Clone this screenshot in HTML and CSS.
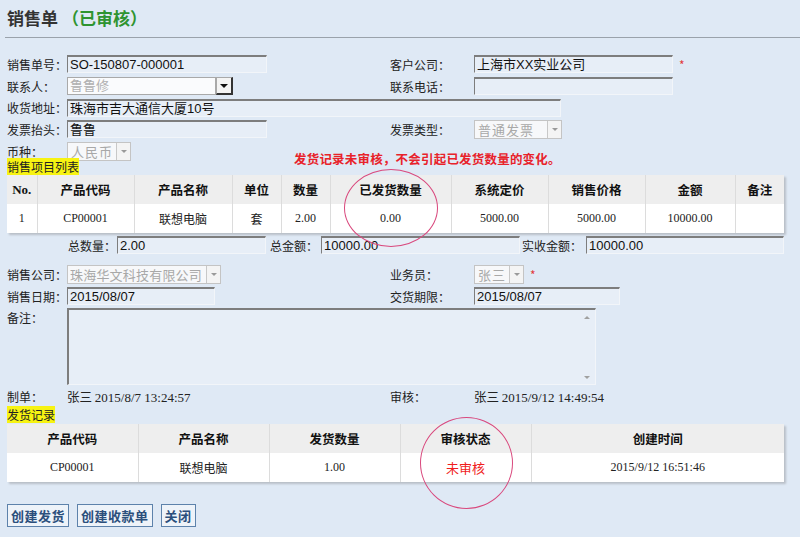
FILE: index.html
```html
<!DOCTYPE html>
<html lang="zh">
<head>
<meta charset="utf-8">
<title>销售单</title>
<link rel="stylesheet" href="styles.css">
</head>
<body>
<div class="page">
  <div class="title"><span class="t-main">销售单</span><span class="t-status">（已审核）</span></div>
  <div class="rule"></div>

  <div class="form">
    <div class="row">
      <span class="lbl">销售单号：</span>
      <span class="inp w200">SO-150807-000001</span>
      <span class="lbl">客户公司：</span>
      <span class="fld"><span class="inp w199">上海市XX实业公司</span><span class="req">*</span></span>
    </div>
    <div class="row">
      <span class="lbl">联系人：</span>
      <span class="fld"><span class="combo"><span class="combo-text">鲁鲁修</span></span><span class="combo-btn"><span class="tri"></span></span></span>
      <span class="lbl">联系电话：</span>
      <span class="inp w199"></span>
    </div>
    <div class="row short">
      <span class="lbl">收货地址：</span>
      <span class="inp w494 span3">珠海市吉大通信大厦10号</span>
    </div>
    <div class="row">
      <span class="lbl">发票抬头：</span>
      <span class="inp w200">鲁鲁</span>
      <span class="lbl">发票类型：</span>
      <span class="sel w88"><span class="sel-text">普通发票</span><span class="sel-btn"><span class="dtri"></span></span></span>
    </div>
    <div class="row">
      <span class="lbl">币种：</span>
      <span class="fld span3">
        <span class="sel w64"><span class="sel-text">人民币</span><span class="sel-btn"><span class="dtri"></span></span></span>
        <span class="notice">发货记录未审核，不会引起已发货数量的变化。</span>
      </span>
    </div>
  </div>

  <div class="section"><mark class="hl">销售项目列表</mark></div>
  <table class="grid items">
    <colgroup>
      <col style="width:30px"><col style="width:97px"><col style="width:98px"><col style="width:49px"><col style="width:49px"><col style="width:121px"><col style="width:97px"><col style="width:97px"><col style="width:90px"><col style="width:49px">
    </colgroup>
    <thead>
      <tr><th class="serif">No.</th><th>产品代码</th><th>产品名称</th><th>单位</th><th>数量</th><th>已发货数量</th><th>系统定价</th><th>销售价格</th><th>金额</th><th>备注</th></tr>
    </thead>
    <tbody>
      <tr><td class="serif">1</td><td class="serif">CP00001</td><td>联想电脑</td><td>套</td><td class="num">2.00</td><td class="num">0.00</td><td class="num">5000.00</td><td class="num">5000.00</td><td class="num">10000.00</td><td></td></tr>
    </tbody>
  </table>

  <div class="totals">
    <span class="tl w49">总数量：</span><span class="inp w149">2.00</span>
    <span class="tl w51 ml4">总金额：</span><span class="inp w199">10000.00</span>
    <span class="tl w64 ml2">实收金额：</span><span class="inp w198">10000.00</span>
  </div>

  <div class="form form2">
    <div class="row">
      <span class="lbl">销售公司：</span>
      <span class="sel w154"><span class="sel-text tight">珠海华文科技有限公司</span><span class="sel-btn"><span class="dtri"></span></span></span>
      <span class="lbl">业务员：</span>
      <span class="fld"><span class="sel w50"><span class="sel-text">张三</span><span class="sel-btn"><span class="dtri"></span></span></span><span class="req">*</span></span>
    </div>
    <div class="row">
      <span class="lbl">销售日期：</span>
      <span class="inp w148">2015/08/07</span>
      <span class="lbl">交货期限：</span>
      <span class="inp w146">2015/08/07</span>
    </div>
    <div class="row tall">
      <span class="lbl top">备注：</span>
      <span class="area span3"><span class="scroll"><span class="up"></span><span class="down"></span></span></span>
    </div>
    <div class="row meta">
      <span class="lbl">制单：</span>
      <span class="who">张三 <span class="serif">2015/8/7 13:24:57</span></span>
      <span class="lbl">审核：</span>
      <span class="who">张三 <span class="serif">2015/9/12 14:49:54</span></span>
    </div>
  </div>

  <div class="section s2"><mark class="hl">发货记录</mark></div>
  <table class="grid ships">
    <colgroup>
      <col style="width:131px"><col style="width:131px"><col style="width:131px"><col style="width:131px"><col style="width:253px">
    </colgroup>
    <thead>
      <tr><th>产品代码</th><th>产品名称</th><th>发货数量</th><th>审核状态</th><th>创建时间</th></tr>
    </thead>
    <tbody>
      <tr><td class="serif">CP00001</td><td>联想电脑</td><td class="serif">1.00</td><td class="red">未审核</td><td class="serif">2015/9/12 16:51:46</td></tr>
    </tbody>
  </table>

  <div class="buttons">
    <button class="btn">创建发货</button>
    <button class="btn">创建收款单</button>
    <button class="btn">关闭</button>
  </div>

  <div class="ring ring1"></div>
  <div class="ring ring2"></div>
</div>
</body>
</html>
```

FILE: styles.css
```css
html, body {
  margin: 0;
  padding: 0;
  background: #dfe9f5;
}
body {
  font-family: "Noto Sans CJK SC", "Liberation Sans", sans-serif;
  font-size: 12px;
  color: #222;
  width: 800px;
  height: 537px;
  overflow: hidden;
}
.page {
  position: relative;
  padding: 0 0 0 7px;
}
.title {
  height: 30px;
  display: flex;
  align-items: center;
  padding-top: 2px;
}
.t-main {
  font-size: 17px;
  font-weight: bold;
  color: #333;
}
.t-status {
  font-size: 17px;
  font-weight: bold;
  color: #2f9430;
  margin-left: 4px;
}
.rule {
  margin: 5px 0 0 -2px;
  border-top: 1px solid #9aa2ab;
  height: 0;
}
.form {
  margin-top: 15px;
}
.row {
  display: grid;
  grid-template-columns: 60px 323px 84px 1fr;
  align-items: center;
  height: 22px;
}
.row.short { height: 21px; }
.span3 { grid-column: 2 / 5; }
.lbl {
  white-space: nowrap;
  color: #222;
}
.lbl.top { align-self: start; padding-top: 2px; }
.fld {
  display: flex;
  align-items: center;
}
.inp {
  display: block;
  box-sizing: border-box;
  height: 18px;
  line-height: 15px;
  font-family: "Liberation Sans", "Noto Sans CJK SC", sans-serif;
  font-size: 13px;
  color: #111;
  background: #e7eef7;
  border-top: 2px solid #7d7d7d;
  border-left: 1px solid #7d7d7d;
  border-right: 1px solid #f2f5f9;
  border-bottom: 1px solid #f2f5f9;
  padding: 0 2px;
  white-space: nowrap;
  overflow: hidden;
}
.w200 { width: 200px; }
.w199 { width: 199px; }
.w198 { width: 198px; }
.w494 { width: 494px; }
.w149 { width: 149px; }
.w148 { width: 148px; }
.w146 { width: 146px; }
.req {
  color: #e23a3a;
  margin-left: 6px;
  font-size: 12px;
}
.combo {
  box-sizing: border-box;
  width: 149px;
  height: 18px;
  background: #fafbfd;
  border: 1px solid #a9a9a9;
  padding: 0 2px;
  font-family: "Liberation Sans", "Noto Sans CJK SC", sans-serif;
  font-size: 13px;
  line-height: 16px;
  color: #b0b0b0;
}
.combo-btn {
  box-sizing: border-box;
  width: 17px;
  height: 18px;
  background: #f4f4f4;
  border: 1px solid #a9a9a9;
  border-right: 2px solid #333;
  border-bottom: 2px solid #333;
  display: flex;
  align-items: center;
  justify-content: center;
}
.tri {
  width: 0;
  height: 0;
  border-left: 4px solid transparent;
  border-right: 4px solid transparent;
  border-top: 4px solid #111;
}
.sel {
  box-sizing: border-box;
  display: flex;
  height: 19px;
  background: #f7f8fa;
  border: 1px solid #c4c4c4;
}
.sel-text {
  flex: 1;
  padding: 0 3px;
  font-size: 13px;
  line-height: 17px;
  color: #a8a8a8;
  white-space: nowrap;
  overflow: hidden;
  letter-spacing: 1px;
}
.sel-text.tight {
  padding: 0 1px 0 2px;
  letter-spacing: 0.2px;
}
.sel-btn {
  width: 13px;
  border-left: 1px solid #c8c8c8;
  background: #f4f4f4;
  display: flex;
  align-items: center;
  justify-content: center;
}
.dtri {
  width: 0;
  height: 0;
  border-left: 3px solid transparent;
  border-right: 3px solid transparent;
  border-top: 3px solid #9a9a9a;
}
.w88 { width: 88px; }
.w64 { width: 64px; }
.w154 { width: 154px; }
.w50 { width: 50px; }
.notice {
  margin-left: 163px;
  align-self: flex-end;
  margin-bottom: -7px;
  color: #e8222a;
  font-weight: bold;
  font-size: 12.5px;
  letter-spacing: 0.2px;
}
.section {
  margin-top: -3px;
  height: 15px;
  line-height: 15px;
}
.hl {
  background: #f7f312;
  color: #222;
  font-size: 12px;
  padding: 0;
}
.grid {
  border-collapse: collapse;
  table-layout: fixed;
  width: 777px;
  background: #fff;
  box-shadow: 2px 2px 2px #b9bfc7;
  margin-top: 1px;
}
.grid th {
  height: 29px;
  padding: 0;
  background: #eeeeee;
  font-weight: bold;
  font-size: 12.5px;
  color: #111;
  border-left: 1px solid #dcdcdc;
  text-align: center;
}
.grid td {
  height: 29px;
  padding: 0;
  text-align: center;
  font-size: 12px;
  color: #222;
  border-left: 1px solid #dcdcdc;
}
.grid th:first-child, .grid td:first-child { border-left: none; }
.serif, .num {
  font-family: "Liberation Serif", "Noto Sans CJK SC", serif;
  font-size: 13px;
}
.grid th.serif { font-size: 13px; }
.grid td.red { color: #f01e1e; font-size: 13px; }
.totals {
  display: flex;
  align-items: center;
  margin: 3px 0 0 61px;
  height: 18px;
}
.tl { white-space: nowrap; }
.w49 { width: 49px; }
.w51 { width: 51px; }
.w64 { width: 64px; }
.ml4 { margin-left: 4px; }
.ml2 { margin-left: 2px; }
.form2 { margin-top: 9px; }
.row.tall { height: 79px; align-items: stretch; }
.area {
  box-sizing: border-box;
  width: 529px;
  height: 77px;
  margin-top: 1px;
  background: #e7eef7;
  border-top: 2px solid #7d7d7d;
  border-left: 2px solid #7d7d7d;
  border-right: 1px solid #f2f5f9;
  border-bottom: 1px solid #f2f5f9;
  display: flex;
  justify-content: flex-end;
}
.scroll {
  width: 16px;
  display: flex;
  flex-direction: column;
  justify-content: space-between;
  align-items: center;
  padding: 6px 0 5px;
}
.up, .down {
  width: 0;
  height: 0;
  border-left: 3px solid transparent;
  border-right: 3px solid transparent;
}
.up { border-bottom: 3px solid #a0a0a0; }
.down { border-top: 3px solid #a0a0a0; }
.row.meta { height: 20px; }
.who { font-size: 12.5px; color: #222; }
.who .serif { font-size: 13px; }
.s2 { margin-top: 1px; }
.ships { margin-top: 2px; }
.buttons {
  display: flex;
  gap: 8px;
  margin-top: 22px;
}
.btn {
  height: 23px;
  padding: 0 3px;
  background: #eef3f9;
  border: 1px solid #5d82ab;
  border-radius: 0;
  color: #2b4f7c;
  font-family: "Noto Sans CJK SC", sans-serif;
  font-weight: bold;
  font-size: 13px;
  line-height: 19px;
  letter-spacing: 0.5px;
  cursor: pointer;
}
.ring {
  position: absolute;
  border: 1.5px solid #d9487d;
  border-radius: 50%;
  pointer-events: none;
}
.ring1 {
  left: 344px;
  top: 169px;
  width: 92px;
  height: 76px;
}
.ring2 {
  left: 420px;
  top: 417px;
  width: 91px;
  height: 90px;
}
```
